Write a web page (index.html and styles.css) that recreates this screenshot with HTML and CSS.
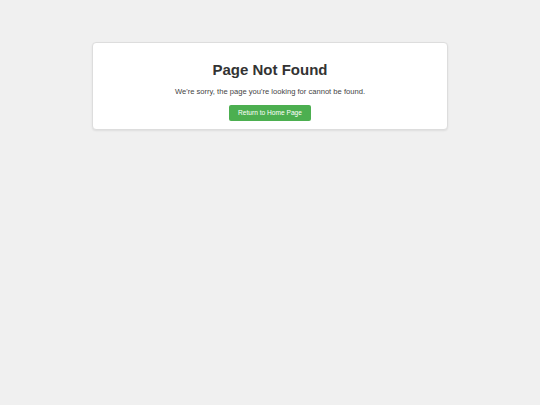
FILE: index.html
```html
<!DOCTYPE html>
<html lang="en">
<head>
    <meta charset="UTF-8">
    <meta name="viewport" content="width=device-width, initial-scale=1.0">
    <title>Page Not Found</title>
    <link rel="stylesheet" href="styles.css">
</head>
<body>
    <div class="container">
        <h1>Page Not Found</h1>
        <p>We're sorry, the page you're looking for cannot be found.</p>
        <a href="/" class="button">Return to Home Page</a>
    </div>
</body>
</html>
```

FILE: styles.css
```css
body {
    font-family: "Liberation Sans", Arial, sans-serif;
    background-color: #f0f0f0;
    color: #333;
    margin: 0;
    padding: 42px 0;
}
.container {
    width: 356px;
    margin: 0 auto;
    box-sizing: border-box;
    padding: 18px 20px 8px;
    background: #fff;
    border: 1px solid #ddd;
    border-radius: 4px;
    box-shadow: 0 1px 2px rgba(0, 0, 0, 0.08);
    text-align: center;
}
h1 {
    font-size: 15px;
    margin: 0 0 9px;
}
p {
    font-size: 7.6px;
    color: #444;
    margin: 0 0 5px;
}
.button {
    display: inline-block;
    background-color: #4caf50;
    color: #fff;
    font-size: 6.6px;
    text-decoration: none;
    padding: 4.5px 9px;
    border-radius: 2px;
}
```
